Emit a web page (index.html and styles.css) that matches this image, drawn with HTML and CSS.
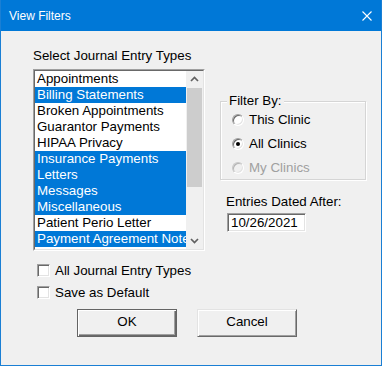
FILE: index.html
```html
<!DOCTYPE html>
<html>
<head>
<meta charset="utf-8">
<link rel="stylesheet" href="styles.css">
</head>
<body>
<div class="window">
  <div class="titlebar">
    <span class="title">View Filters</span>
    <svg class="close" width="10" height="10" viewBox="0 0 10 10"><path d="M0.5 0.5 L9.5 9.5 M9.5 0.5 L0.5 9.5" stroke="#fff" stroke-width="1.1" fill="none"/></svg>
  </div>
  <div class="body">
    <div class="top">
      <div class="left">
        <div class="label">Select Journal Entry Types</div>
        <div class="listbox">
          <div class="listbox-inner">
            <ul class="items">
              <li>Appointments</li>
              <li class="sel">Billing Statements</li>
              <li>Broken Appointments</li>
              <li>Guarantor Payments</li>
              <li>HIPAA Privacy</li>
              <li class="sel">Insurance Payments</li>
              <li class="sel">Letters</li>
              <li class="sel">Messages</li>
              <li class="sel">Miscellaneous</li>
              <li>Patient Perio Letter</li>
              <li class="sel">Payment Agreement Note</li>
            </ul>
            <div class="scrollbar">
              <div class="sb-btn"><svg width="17" height="17" viewBox="0 0 17 17"><polyline points="5,10 8.5,6.5 12,10" fill="none" stroke="#606060" stroke-width="1.7"/></svg></div>
              <div class="sb-track"><div class="thumb"></div></div>
              <div class="sb-btn"><svg width="17" height="17" viewBox="0 0 17 17"><polyline points="5,7 8.5,10.5 12,7" fill="none" stroke="#606060" stroke-width="1.7"/></svg></div>
            </div>
          </div>
        </div>
      </div>
      <div class="right">
        <fieldset class="group">
          <legend>Filter By:</legend>
          <div class="radio-row"><span class="radio"></span><span>This Clinic</span></div>
          <div class="radio-row"><span class="radio checked"></span><span>All Clinics</span></div>
          <div class="radio-row disabled"><span class="radio"></span><span>My Clinics</span></div>
        </fieldset>
        <div class="label date-label">Entries Dated After:</div>
        <div class="textbox">10/26/2021</div>
      </div>
    </div>
    <div class="checks">
      <div class="check-row"><span class="checkbox"></span><span>All Journal Entry Types</span></div>
      <div class="check-row"><span class="checkbox"></span><span>Save as Default</span></div>
    </div>
    <div class="buttons">
      <div class="btn default">OK</div>
      <div class="btn">Cancel</div>
    </div>
  </div>
</div>
</body>
</html>
```

FILE: styles.css
```css
html, body {
  margin: 0;
  padding: 0;
  background: #f0f0f0;
}
.window {
  width: 382px;
  height: 366px;
  box-sizing: border-box;
  border: 1px solid #1a7fd4;
  border-top: none;
  background: #f0f0f0;
  font-family: "Liberation Sans", Arial, sans-serif;
  font-size: 13.333px;
  color: #000;
  overflow: hidden;
}
.titlebar {
  height: 31px;
  background: #0078d7;
  display: flex;
  align-items: flex-start;
  margin: 0 -1px;
  padding: 0 10px 0 9px;
}
.title {
  color: #fff;
  font-size: 12px;
  line-height: 14px;
  margin-top: 9px;
}
.close {
  margin-left: auto;
  margin-top: 11px;
}
.body {
  padding: 17px 0 0 32px;
}
.top {
  display: flex;
}
.left {
  width: 172px;
}
.label {
  line-height: 16px;
  height: 16px;
  white-space: nowrap;
}
.left .label {
  margin-bottom: 5px;
}
.listbox {
  width: 172px;
  height: 182px;
  box-sizing: border-box;
  border: 1px solid;
  border-color: #a0a0a0 #ffffff #ffffff #a0a0a0;
}
.listbox-inner {
  height: 100%;
  box-sizing: border-box;
  border: 1px solid;
  border-color: #696969 #e3e3e3 #e3e3e3 #696969;
  background: #fff;
  display: flex;
}
.items {
  list-style: none;
  margin: 0;
  padding: 0;
  width: 151px;
  overflow: hidden;
}
.items li {
  height: 16px;
  line-height: 16px;
  padding-left: 2px;
  white-space: nowrap;
  overflow: hidden;
}
.items li.sel {
  background: #0078d7;
  color: #fff;
}
.scrollbar {
  width: 17px;
  background: #f0f0f0;
  display: flex;
  flex-direction: column;
}
.sb-btn {
  height: 17px;
  flex: none;
}
.sb-btn svg {
  display: block;
}
.sb-track {
  flex: 1;
  padding: 0 1px;
}
.thumb {
  height: 99px;
  background: #cdcdcd;
}
.right {
  margin-left: 15px;
  margin-top: 46px;
}
.group {
  margin: 0;
  padding: 0 0 0 11px;
  width: 146px;
  height: 86px;
  box-sizing: border-box;
  border: 1px solid #d5d5d5;
  box-shadow: 1px 1px 0 #fff, inset 1px 1px 0 #fff;
  overflow: visible;
}
.group legend {
  margin-left: -5px;
  padding: 0 2px;
  line-height: 14px;
  height: 14px;
  background: #f0f0f0;
}
.radio-row {
  height: 24px;
  display: flex;
  align-items: center;
  line-height: 16px;
  white-space: nowrap;
}
.radio {
  width: 12px;
  height: 12px;
  box-sizing: border-box;
  border-radius: 50%;
  border: 1px solid;
  border-color: #a0a0a0 #ffffff #ffffff #a0a0a0;
  box-shadow: inset 1px 1px 0 #696969, inset -1px -1px 0 #e3e3e3;
  background: #fff;
  margin-right: 5px;
  position: relative;
  flex: none;
}
.radio.checked::after {
  content: "";
  position: absolute;
  left: 3px;
  top: 3px;
  width: 4px;
  height: 4px;
  border-radius: 50%;
  background: #000;
}
.radio-row.disabled {
  color: #a0a0a0;
}
.radio-row.disabled .radio {
  background: #f0f0f0;
  border-color: #c8c8c8 #ffffff #ffffff #c8c8c8;
  box-shadow: inset 1px 1px 0 #b4b4b4, inset -1px -1px 0 #e3e3e3;
}
.date-label {
  margin-top: 14px;
  margin-left: 6px;
}
.textbox {
  margin-top: 3px;
  margin-left: 7px;
  width: 79px;
  height: 19px;
  box-sizing: border-box;
  border: 1px solid;
  border-color: #a0a0a0 #ffffff #ffffff #a0a0a0;
  box-shadow: inset 1px 1px 0 #696969, inset -1px -1px 0 #e3e3e3;
  background: #fff;
  padding-left: 3px;
  padding-top: 1px;
  line-height: 15px;
}
.checks {
  margin-top: 9px;
  padding-left: 4px;
  display: flex;
  flex-direction: column;
  gap: 1px;
}
.check-row {
  height: 21px;
  display: flex;
  align-items: center;
  line-height: 16px;
  white-space: nowrap;
}
.checkbox {
  width: 13px;
  height: 13px;
  box-sizing: border-box;
  border: 1px solid;
  border-color: #a0a0a0 #ffffff #ffffff #a0a0a0;
  box-shadow: inset 1px 1px 0 #696969, inset -1px -1px 0 #e3e3e3;
  background: #fff;
  margin-right: 5px;
  flex: none;
}
.buttons {
  margin-top: 6px;
  margin-left: 44px;
  display: flex;
  gap: 20px;
}
.btn {
  width: 100px;
  height: 28px;
  box-sizing: border-box;
  display: flex;
  align-items: center;
  justify-content: center;
  line-height: 16px;
  padding-bottom: 2px;
  border: 1px solid;
  border-color: #e3e3e3 #696969 #696969 #e3e3e3;
  box-shadow: inset 1px 1px 0 #fff, inset -1px -1px 0 #a0a0a0;
  background: #f0f0f0;
}
.btn.default {
  border-color: #646464;
  box-shadow: inset 1px 1px 0 #fff, inset -1px -1px 0 #696969, inset -2px -2px 0 #a0a0a0;
}
```
